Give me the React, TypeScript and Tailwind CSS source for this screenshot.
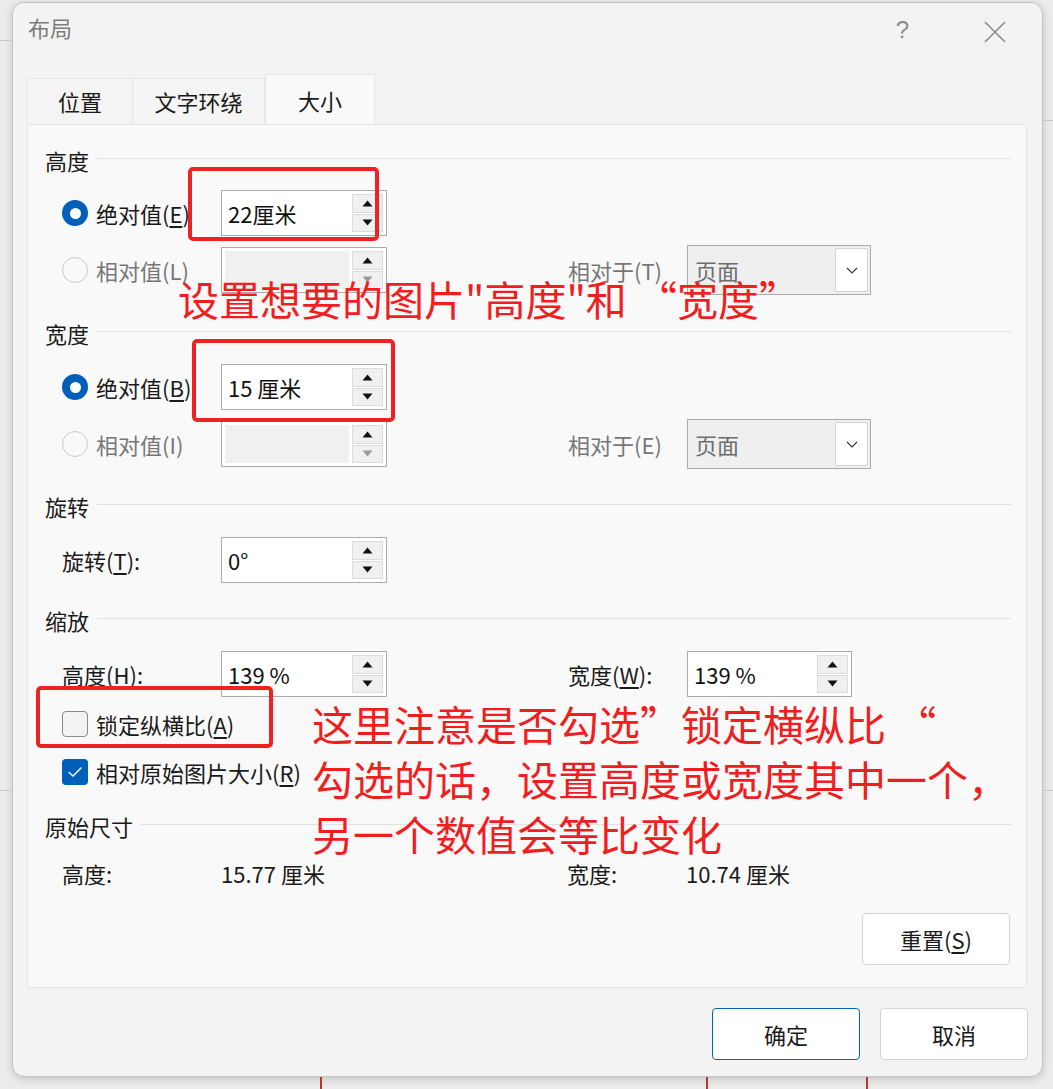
import React from "react";

const CJK = "font-['Microsoft_YaHei','Noto_Sans_CJK_SC',sans-serif]";

function Radio({ checked, disabled }: { checked?: boolean; disabled?: boolean }) {
    if (checked) {
        return (
            <span className="w-[26px] h-[26px] rounded-full bg-[#005fb8] flex items-center justify-center shrink-0">
                <span className="w-[11px] h-[11px] rounded-full bg-white" />
            </span>
        );
    }
    return (
        <span
            className={`w-[26px] h-[26px] rounded-full border-[1.5px] shrink-0 ${
                disabled ? "border-[#c9c9c9] bg-[#f9f9f9]" : "border-[#8a8a8a] bg-[#f3f3f3]"
            }`}
        />
    );
}

function Checkbox({ checked }: { checked?: boolean }) {
    if (checked) {
        return (
            <span className="w-[26px] h-[26px] rounded-[4px] bg-[#005fb8] flex items-center justify-center shrink-0">
                <svg width="16" height="12" viewBox="0 0 16 12" fill="none">
                    <path d="M2 6.5 L6 10 L14 2" stroke="white" strokeWidth="1.5" strokeLinecap="round" strokeLinejoin="round" />
                </svg>
            </span>
        );
    }
    return <span className="w-[26px] h-[26px] rounded-[4px] border-[1.5px] border-[#8a8a8a] bg-[#f3f3f3] shrink-0" />;
}

function Arrow({ up, gray }: { up?: boolean; gray?: boolean }) {
    return (
        <svg width="11" height="7" viewBox="0 0 11 7">
            <path d={up ? "M5.5 0.5 L10.5 6.5 L0.5 6.5 Z" : "M0.5 0.5 L10.5 0.5 L5.5 6.5 Z"} fill={gray ? "#9a9a9a" : "#111"} />
        </svg>
    );
}

function Spin({ value, disabled, width = "w-[166px]" }: { value?: string; disabled?: boolean; width?: string }) {
    return (
        <div className={`${width} h-[46px] border border-[#ababab] bg-white flex p-[3px] gap-[3px] shrink-0`}>
            <div
                className={`flex-1 flex items-center pl-[3px] text-[22px] text-[#111] ${disabled ? "bg-[#f0f0f0]" : ""}`}
            >
                {value}
            </div>
            <div className="w-[31px] flex flex-col gap-[1px]">
                <div className="flex-1 bg-[#f0f0f0] border border-[#dcdcdc] flex items-center justify-center">
                    <Arrow up />
                </div>
                <div className="flex-1 bg-[#f0f0f0] border border-[#dcdcdc] flex items-center justify-center">
                    <Arrow gray={disabled} />
                </div>
            </div>
        </div>
    );
}

function Dropdown() {
    return (
        <div className="w-[184px] h-[50px] border border-[#ababab] bg-[#efefef] flex items-center p-[2px] shrink-0">
            <div className="flex-1 pl-[5px] text-[22px] text-[#6d6d6d]">页面</div>
            <div className="w-[33px] h-full bg-white border border-[#d4d4d4] rounded-[2px] flex items-center justify-center">
                <svg width="12" height="7" viewBox="0 0 12 7" fill="none">
                    <path d="M1 1 L6 6 L11 1" stroke="#333" strokeWidth="1.1" />
                </svg>
            </div>
        </div>
    );
}

function Heading({ title, mt }: { title: string; mt: string }) {
    return (
        <div className={`h-[30px] ${mt} flex items-center pl-[17px] pr-[15px] gap-[8px]`}>
            <span className="text-[22px] text-[#1a1a1a] leading-none">{title}</span>
            <span className="flex-1 h-px bg-[#e1e1e1] -mt-[3px]" />
        </div>
    );
}

function U({ c }: { c: string }) {
    return <span className="underline underline-offset-[3px]">{c}</span>;
}

export default function App() {
    return (
        <div className={`relative w-[1053px] h-[1089px] bg-[#ececec] overflow-hidden pt-[2px] pl-[12px] ${CJK}`}>
            {/* bits of the document behind */}
            <div className="absolute left-0 top-[40px] w-[12px] h-px bg-[#c8c8c8]" />
            <div className="absolute left-0 top-[790px] w-[12px] h-px bg-[#c8c8c8]" />
            <div className="absolute right-0 top-[120px] w-[10px] h-px bg-[#c8c8c8]" />
            <div className="absolute right-0 top-[790px] w-[10px] h-px bg-[#c8c8c8]" />
            <div className="absolute left-[320px] bottom-0 w-[2px] h-[12px] bg-[#c83030]" />
            <div className="absolute left-[706px] bottom-0 w-[2px] h-[12px] bg-[#c83030]" />
            <div className="absolute left-[866px] bottom-0 w-[2px] h-[12px] bg-[#c83030]" />

            <div className="w-[1031px] h-[1075px] bg-[#f3f3f3] border border-[#c4c4c4] rounded-[12px] shadow-[0_2px_8px_rgba(0,0,0,0.18)] flex flex-col px-[14px]">
                {/* title bar */}
                <div className="h-[71px] flex items-start">
                    <span className="mt-[8px] ml-[1px] text-[22px] text-[#7c7c7c]">布局</span>
                    <span className="ml-auto mt-[9px] text-[24px] text-[#8a8a8a] font-['Liberation_Sans',sans-serif]">?</span>
                    <span className="ml-[75px] mr-[22px] mt-[18px]">
                        <svg width="22" height="22" viewBox="0 0 22 22" fill="none">
                            <path d="M1 1 L21 21 M21 1 L1 21" stroke="#8a8a8a" strokeWidth="1.6" />
                        </svg>
                    </span>
                </div>

                {/* tabs */}
                <div className="h-[50px] flex items-end">
                    <div className="w-[106px] h-[46px] flex items-center justify-center text-[22px] text-[#1a1a1a] border border-b-0 border-[#e6e6e6] bg-[#f4f4f4]">
                        位置
                    </div>
                    <div className="w-[132px] h-[46px] flex items-center justify-center text-[22px] text-[#1a1a1a] border border-b-0 border-l-0 border-[#e6e6e6] bg-[#f4f4f4]">
                        文字环绕
                    </div>
                    <div className="w-[110px] h-[50px] flex items-center justify-center text-[22px] text-[#1a1a1a] bg-[#f9f9f9] border border-b-0 border-[#e8e8e8] pt-[2px]">
                        大小
                    </div>
                </div>

                {/* panel */}
                <div className="w-[1000px] h-[864px] bg-[#f9f9f9] border border-[#e5e5e5] flex flex-col pt-[20px] text-[22px] text-[#1a1a1a]">
                    <Heading title="高度" mt="mt-0" />
                    <div className="h-[46px] mt-[15px] flex items-center pl-[34px]">
                        <div className="w-[159px] flex items-center gap-[8px]">
                            <Radio checked />
                            <span>绝对值(<U c="E" />)</span>
                        </div>
                        <Spin value="22厘米" />
                    </div>
                    <div className="h-[46px] mt-[11px] flex items-center pl-[34px]">
                        <div className="w-[159px] flex items-center gap-[8px] text-[#777]">
                            <Radio disabled />
                            <span>相对值(L)</span>
                        </div>
                        <Spin disabled />
                        <div className="w-[181px]" />
                        <div className="w-[119px] text-[#777]">相对于(T)</div>
                        <Dropdown />
                    </div>

                    <Heading title="宽度" mt="mt-[25px]" />
                    <div className="h-[46px] mt-[16px] flex items-center pl-[34px]">
                        <div className="w-[159px] flex items-center gap-[8px]">
                            <Radio checked />
                            <span>绝对值(<U c="B" />)</span>
                        </div>
                        <Spin value="15 厘米" />
                    </div>
                    <div className="h-[46px] mt-[11px] flex items-center pl-[34px]">
                        <div className="w-[159px] flex items-center gap-[8px] text-[#777]">
                            <Radio disabled />
                            <span>相对值(I)</span>
                        </div>
                        <Spin disabled />
                        <div className="w-[181px]" />
                        <div className="w-[119px] text-[#777]">相对于(E)</div>
                        <Dropdown />
                    </div>

                    <Heading title="旋转" mt="mt-[24px]" />
                    <div className="h-[46px] mt-[16px] flex items-center pl-[34px]">
                        <div className="w-[159px]">
                            旋转(<U c="T" />):
                        </div>
                        <Spin value="0°" />
                    </div>

                    <Heading title="缩放" mt="mt-[22px]" />
                    <div className="h-[46px] mt-[16px] flex items-center pl-[34px]">
                        <div className="w-[159px]">
                            高度(<U c="H" />):
                        </div>
                        <Spin value="139 %" />
                        <div className="w-[181px]" />
                        <div className="w-[119px]">
                            宽度(<U c="W" />):
                        </div>
                        <Spin value="139 %" width="w-[165px]" />
                    </div>
                    <div className="h-[30px] mt-[12px] flex items-center pl-[34px] gap-[8px]">
                        <Checkbox />
                        <span>锁定纵横比(<U c="A" />)</span>
                    </div>
                    <div className="h-[30px] mt-[18px] flex items-center pl-[34px] gap-[8px]">
                        <Checkbox checked />
                        <span>相对原始图片大小(<U c="R" />)</span>
                    </div>

                    <Heading title="原始尺寸" mt="mt-[24px]" />
                    <div className="h-[30px] mt-[17px] flex items-center pl-[34px]">
                        <div className="w-[159px]">高度:</div>
                        <div className="w-[346px]">15.77 厘米</div>
                        <div className="w-[119px]">宽度:</div>
                        <div>10.74 厘米</div>
                    </div>
                    <div className="mt-[25px] flex justify-end pr-[16px]">
                        <button className="w-[148px] h-[52px] bg-white border border-[#d4d4d4] rounded-[4px] text-[22px] text-[#1a1a1a]">
                            重置(<U c="S" />)
                        </button>
                    </div>
                </div>

                {/* footer */}
                <div className="flex justify-end gap-[20px] pt-[20px]">
                    <button className="w-[148px] h-[52px] bg-white border border-[#0067c0] rounded-[4px] text-[22px] text-[#1a1a1a]">
                        确定
                    </button>
                    <button className="w-[148px] h-[52px] bg-white border border-[#d4d4d4] rounded-[4px] text-[22px] text-[#1a1a1a]">
                        取消
                    </button>
                </div>
            </div>

            {/* red annotations */}
            <div className="absolute left-[188px] top-[167px] w-[191px] h-[74px] border-[4px] border-[#ee2222] rounded-[5px]" />
            <div className="absolute left-[192px] top-[339px] w-[203px] h-[83px] border-[4px] border-[#ee2222] rounded-[5px]" />
            <div className="absolute left-[36px] top-[686px] w-[237px] h-[62px] border-[4px] border-[#ee2222] rounded-[5px]" />

            <div className="absolute left-[178px] top-[276px] text-[41px] leading-[44px] text-[#f01e1e] whitespace-nowrap">
                设置想要的图片"高度"和 “宽度”
            </div>
            <div className="absolute left-[312px] top-[696px] text-[41px] leading-[55px] text-[#f01e1e] whitespace-nowrap">
                <div>这里注意是否勾选”锁定横纵比 “</div>
                <div>勾选的话，设置高度或宽度其中一个，</div>
                <div>另一个数值会等比变化</div>
            </div>
        </div>
    );
}
